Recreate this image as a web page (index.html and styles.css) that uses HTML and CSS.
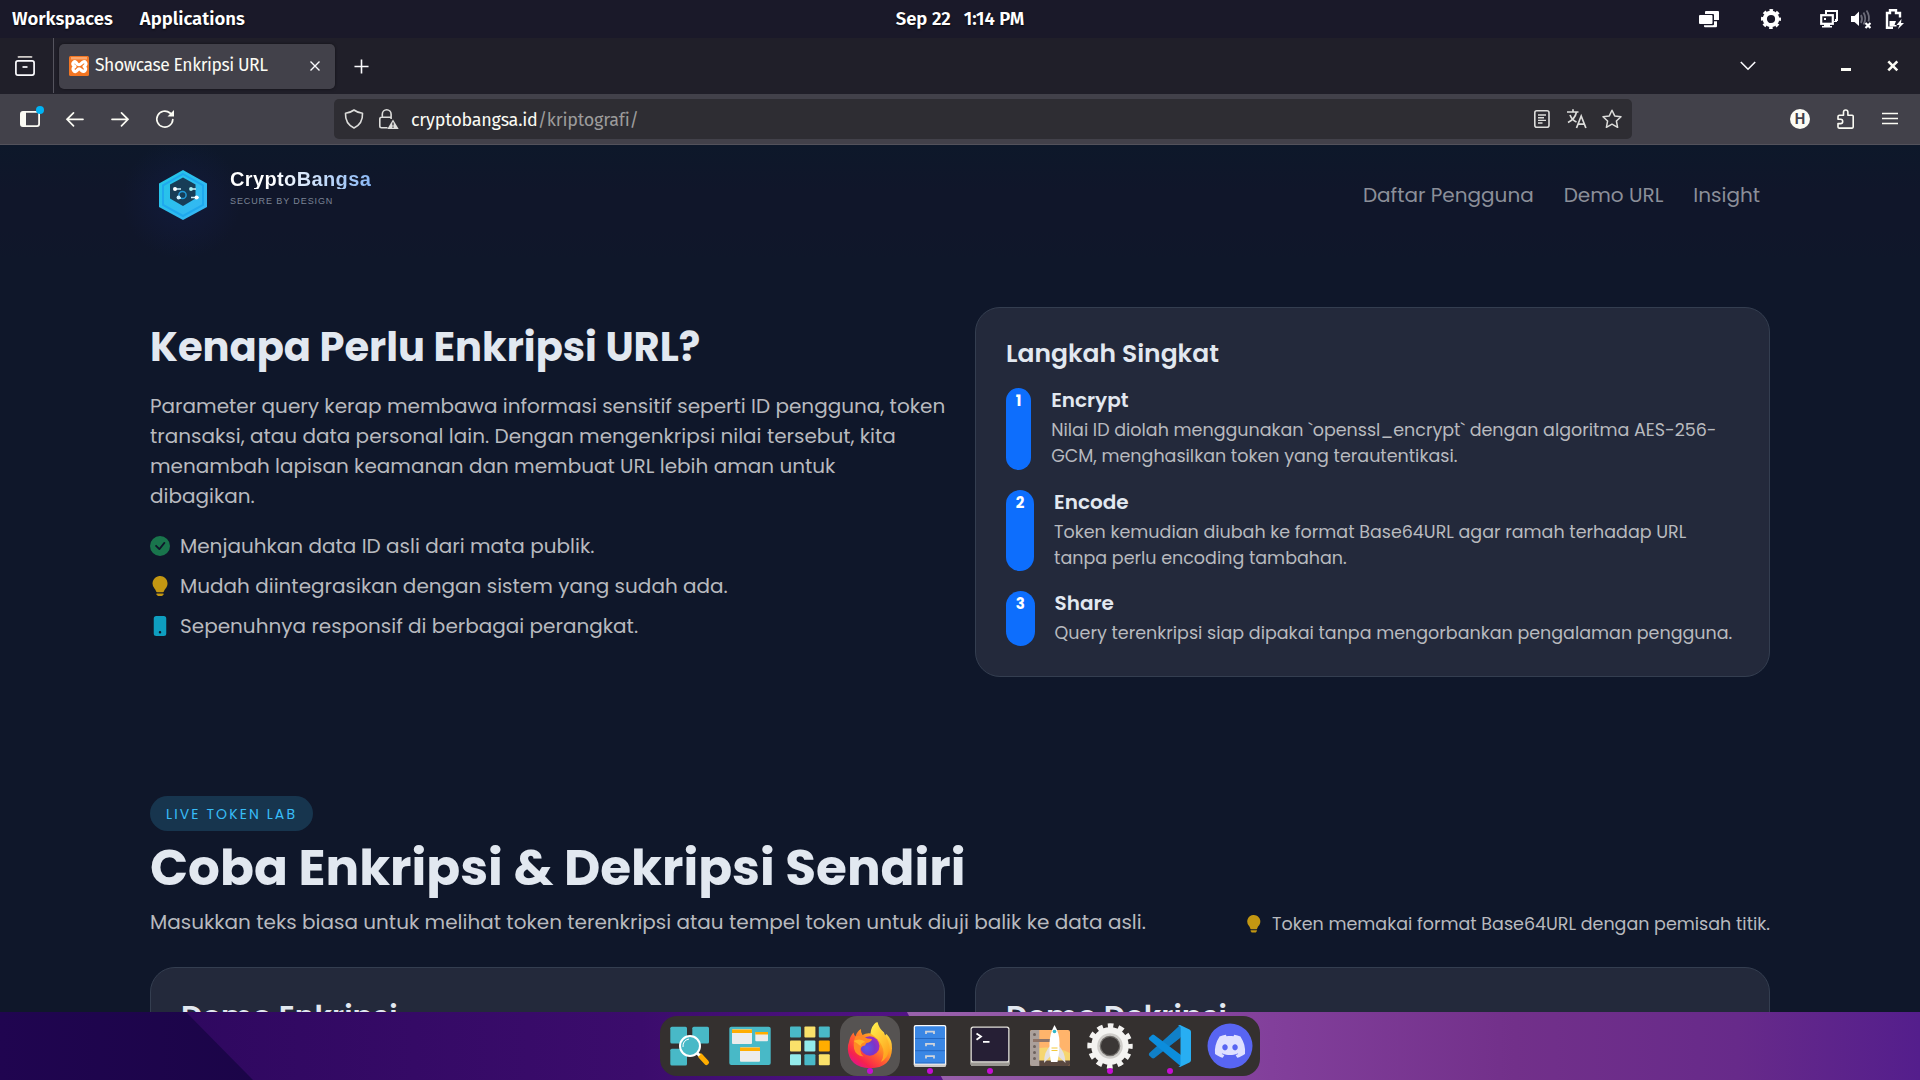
FILE: index.html
```html
<!DOCTYPE html>
<html lang="id">
<head>
<meta charset="utf-8">
<title>Showcase Enkripsi URL</title>
<link rel="stylesheet" href="styles.css">
</head>
<body>
<header class="panel">
  <nav class="panel-left"><span>Workspaces</span><span>Applications</span></nav>
  <div class="clock"><span>Sep 22</span><span>1:14 PM</span></div>
  <div class="tray">
    <svg class="ic tray-windows" viewBox="0 0 20 20"><path fill="#fff" d="M7 2h12q1 0 1 1v8h-5V6q0-1-1-1H6V3q0-1 1-1zM1 6h11.500q1 0 1 1v7q0 1-1 1H1q-1 0-1-1V7q0-1 1-1zM5 16.300h9q1 0 1-1v-3h3V17q0 1.300-1 1.300H6q-1 0-1-1z"/></svg>
    <svg class="ic tray-gear" viewBox="0 0 20 20"><circle cx="10" cy="10" r="6.200" fill="none" stroke="#fff" stroke-width="4.200"/><circle cx="10" cy="10" r="8.800" fill="none" stroke="#fff" stroke-width="2.400" stroke-dasharray="3.600 3.312" stroke-dashoffset="1.800"/></svg>
    <svg class="ic tray-screens" viewBox="0 0 20 20"><path fill="none" stroke="#fff" stroke-width="2" d="M6 5V2h11v9h-2"/><rect x="1.200" y="6.200" width="11.600" height="8.600" fill="none" stroke="#fff" stroke-width="2.200"/><path fill="#fff" d="M4 9h2v2H4zM4 15h6v2h2v1.500H2V17h2zM14 12h3v1h-3z"/></svg>
    <svg class="ic tray-sound" viewBox="0 0 20 20"><path fill="#fff" d="M0 7h3.500L8 2.500v14.500L3.500 13H0z"/><path fill="none" stroke="#6c6b78" stroke-width="1.800" d="M10 6q2 4 0 8M12.500 3.500q3.500 6 0 12M15.500 1.500q3.500 5 2 11"/><path stroke="#fff" stroke-width="2.200" d="M14.500 14l5 5m0-5l-5 5"/></svg>
    <svg class="ic tray-battery" viewBox="0 0 20 20"><path fill="none" stroke="#fff" stroke-width="2.400" d="M8 18.800H2V4h3V1.200h6V4h4v4.500"/><path fill="#fff" d="M4.500 12h6.500l-1.500 4h2v1.500H4.500zM16.500 10l-5 6h3l-1.500 4 6-6h-3z"/></svg>
  </div>
</header>

<div class="tabbar">
  <svg class="ic" viewBox="0 0 20 20" fill="none" stroke="#fbfbfe" stroke-width="1.700"><path stroke="#cfcbc8" d="M3 1.500Q3.500.800 4.500.800h11q1 0 1.500.700"/><rect x=".9" y="4.900" width="18.200" height="14.200" rx="2"/><path d="M7.500 11h5"/></svg>
  <div class="tab-divider"></div>
  <div class="tab">
    <svg class="ic" viewBox="0 0 20 20"><rect width="20" height="20" rx="1.500" fill="#f37623"/><path fill="#f9a76e" d="M2 1h16v2.500H2z"/><path fill="none" stroke="#fff" stroke-width="3.200" stroke-linecap="round" stroke-linejoin="round" d="M7.800 7.500Q6.500 4.500 4.500 6.500t1.500 4q-3 1.500-1.500 4t4-.500q1.500-2.500 3.500 0 2.500 2.500 4 .500t-1-4q3-2 1.500-4t-4.300 1q-2.200 2.500-4.400 0z"/></svg>
    <span class="tab-title">Showcase Enkripsi URL</span>
    <svg class="tab-close" viewBox="0 0 10 10" stroke="#fbfbfe" stroke-width="1.400"><path d="M.5.5l9 9m0-9l-9 9"/></svg>
  </div>
  <svg class="newtab" viewBox="0 0 16 16" stroke="#fbfbfe" stroke-width="1.700"><path d="M8 .5v15M.5 8h15"/></svg>
  <svg class="tab-list" viewBox="0 0 16 10" fill="none" stroke="#fbfbfe" stroke-width="1.600"><path d="M.8 1L8 8.200 15.200 1"/></svg>
  <svg class="win-min" viewBox="0 0 12 12"><path fill="#fbfbf4" d="M1 8h10v3H1z"/></svg>
  <svg class="win-close" viewBox="0 0 12 12" stroke="#fbfbf4" stroke-width="2.600"><path d="M1.300 1.300l9 9m0-9l-9 9"/></svg>
</div>

<div class="toolbar">
  <div class="sidebar-btn">
    <svg class="ic" viewBox="0 0 20 20"><rect x=".9" y="2.900" width="18.200" height="14.200" rx="2" fill="none" stroke="#fbfbf4" stroke-width="1.800"/><path fill="#fbfbf4" d="M1 3h5v14H1z"/></svg>
    <i class="notice"></i>
  </div>
  <svg class="ic" viewBox="0 0 20 20" fill="none" stroke="#fbfbf4" stroke-width="1.700" stroke-linecap="round"><path d="M18 10.300H2.200M8.500 3.800L2 10.300l6.500 6.500"/></svg>
  <svg class="ic" viewBox="0 0 20 20" fill="none" stroke="#fbfbf4" stroke-width="1.700" stroke-linecap="round"><path d="M2 10.300h15.800M11.500 3.800l6.500 6.500-6.500 6.500"/></svg>
  <svg class="ic" viewBox="0 0 20 20" fill="none" stroke="#fbfbf4" stroke-width="1.700" stroke-linecap="round"><path d="M17.800 10.500A8 8 0 1 1 15 4l2.200 2"/><path fill="#fbfbf4" stroke="none" d="M19 1v6.500h-6.500z"/></svg>
  <div class="urlbar">
    <svg class="ic" viewBox="0 0 20 20" fill="none" stroke="#dddddb" stroke-width="1.600" stroke-linejoin="round"><path d="M10 1q4 3 8.500 3.200Q19 14.500 10 19 1 14.500 1.500 4.200 6 4 10 1z"/></svg>
    <svg class="ic lock" viewBox="0 0 20 20" fill="none" stroke="#dddddb" stroke-width="1.600"><path d="M8.500 18.800H2.500q-1.700 0-1.700-1.700V10q0-1.700 1.700-1.700h8.800M3.300 8V5.200a4.400 4.400 0 0 1 8.800 0V10"/><path fill="#dddddb" stroke="none" d="M14 10.500L20 20.500H8z"/><path stroke="#2e2d33" stroke-width="1.300" d="M14 13.500v3M14 17.500v1.300"/></svg>
    <span class="url">cryptobangsa.id<span class="url-path">/kriptografi/</span></span>
    <svg class="ic" viewBox="0 0 20 20" fill="none" stroke="#dddddb" stroke-width="1.600"><rect x="2.800" y="1.800" width="14.200" height="16.400" rx="2"/><path stroke-width="1.400" d="M6 6h8M6 8.700h6M6 11.400h8M6 14h4.500"/></svg>
    <svg class="ic" viewBox="0 0 20 20" fill="none" stroke="#dddddb" stroke-width="1.700"><path d="M0 3h11.500M6 .2V3M9.500 3Q8 10 1 13.500M3 6q2 5 6.500 7M9.500 19l4.700-12 4.700 12M11.300 15.200h6"/></svg>
    <svg class="ic" viewBox="0 0 20 20" fill="none" stroke="#dddddb" stroke-width="1.500" stroke-linejoin="round"><path d="M10 1.200l2.700 5.700 6.300.800-4.600 4.300 1.200 6.300L10 15.200l-5.600 3.100L5.600 12 1 7.700l6.300-.800z"/></svg>
  </div>
  <div class="account">H</div>
  <svg class="ic" viewBox="0 0 20 20" fill="none" stroke="#fbfbf4" stroke-width="1.600" stroke-linejoin="round"><path d="M4.500 6.300h4V3.200a2.200 2.200 0 0 1 4.400 0v3.100h4.300q1 0 1 1v10.800q0 1-1 1H4q-1 0-1-1v-3.500h2.500a2.200 2.200 0 0 0 0-4.400H3V7.500q0-1.200 1.500-1.200z"/></svg>
  <svg class="ic" viewBox="0 0 20 20" stroke="#fbfbf4" stroke-width="1.300"><path d="M2 4.500h16M2 9.500h16M2 14.500h16"/></svg>
</div>

<main class="viewport">
  <header class="site-header">
    <div class="brand">
      <svg class="logo" viewBox="0 0 50 52">
        <defs><linearGradient id="hex" x1="0" y1="0" x2="1" y2="1"><stop offset="0" stop-color="#22c8e6"/><stop offset="1" stop-color="#38b4f6"/></linearGradient></defs>
        <path fill="url(#hex)" d="M25 1l24 13.500v23.500L25 51 1 38V14.500z"/>
        <path fill="none" stroke="#1fa9ee" stroke-width="2" d="M25 5l20 11.300v19.700L25 47 5 36V16.300z"/>
        <path fill="#173d57" d="M25 8.500l12.500 7v14L25 37l-13-7.500v-14z"/>
        <circle cx="24.500" cy="26" r="3.600" fill="none" stroke="#2299d8" stroke-width="1.500"/>
        <path stroke="#c9eefa" stroke-width="1.300" d="M17 20h6M33 20h5M19 29h4M33 28.500h8"/>
        <g fill="#fff"><circle cx="17" cy="20" r="2"/><circle cx="33" cy="20" r="1.900" fill="#a8f0f2"/><circle cx="20.500" cy="28.500" r="1.900" fill="#cdefff"/><circle cx="38.500" cy="28.500" r="2"/></g>
      </svg>
      <div class="brand-text"><strong>CryptoBangsa</strong><small>SECURE BY DESIGN</small></div>
    </div>
    <nav class="site-nav"><a>Daftar Pengguna</a><a>Demo URL</a><a>Insight</a></nav>
  </header>

  <section class="why">
    <div class="why-text">
      <h2>Kenapa Perlu Enkripsi URL?</h2>
      <p>Parameter query kerap membawa informasi sensitif seperti ID pengguna, token<br>transaksi, atau data personal lain. Dengan mengenkripsi nilai tersebut, kita<br>menambah lapisan keamanan dan membuat URL lebih aman untuk<br>dibagikan.</p>
      <ul>
        <li><svg viewBox="0 0 16 16" fill="#19754c"><path d="M16 8A8 8 0 1 1 0 8a8 8 0 0 1 16 0m-3.970-3.030a.75.75 0 0 0-1.080.022L7.477 9.417 5.384 7.323a.75.75 0 0 0-1.060 1.060L6.970 11.030a.75.75 0 0 0 1.079-.020l3.992-4.990a.75.75 0 0 0-.010-1.050z"/></svg>Menjauhkan data ID asli dari mata publik.</li>
        <li><svg viewBox="0 0 16 16" fill="#c39712"><path d="M2 6a6 6 0 1 1 10.174 4.310c-.203.196-.359.400-.453.619l-.762 1.769A.5.5 0 0 1 10.500 13h-5a.5.5 0 0 1-.460-.302l-.761-1.770a2 2 0 0 0-.453-.618A5.980 5.980 0 0 1 2 6m3 8.500a.5.5 0 0 1 .500-.500h5a.5.5 0 0 1 0 1l-.224.447a1 1 0 0 1-.894.553H6.618a1 1 0 0 1-.894-.553L5.500 15a.5.5 0 0 1-.500-.500"/></svg>Mudah diintegrasikan dengan sistem yang sudah ada.</li>
        <li><svg viewBox="0 0 16 16" fill="#0e9ec0"><path d="M3 2a2 2 0 0 1 2-2h6a2 2 0 0 1 2 2v12a2 2 0 0 1-2 2H5a2 2 0 0 1-2-2zm6 11a1 1 0 1 0-2 0 1 1 0 0 0 2 0"/></svg>Sepenuhnya responsif di berbagai perangkat.</li>
      </ul>
    </div>
    <article class="card steps">
      <h3>Langkah Singkat</h3>
      <div class="step"><b>1</b><div><h4>Encrypt</h4><p>Nilai ID diolah menggunakan `openssl_encrypt` dengan algoritma AES-256-<br>GCM, menghasilkan token yang terautentikasi.</p></div></div>
      <div class="step"><b>2</b><div><h4>Encode</h4><p>Token kemudian diubah ke format Base64URL agar ramah terhadap URL<br>tanpa perlu encoding tambahan.</p></div></div>
      <div class="step"><b>3</b><div><h4>Share</h4><p>Query terenkripsi siap dipakai tanpa mengorbankan pengalaman pengguna.</p></div></div>
    </article>
  </section>

  <section class="lab">
    <div class="lab-head">
      <div>
        <span class="pill">LIVE TOKEN LAB</span>
        <h1>Coba Enkripsi &amp; Dekripsi Sendiri</h1>
        <p>Masukkan teks biasa untuk melihat token terenkripsi atau tempel token untuk diuji balik ke data asli.</p>
      </div>
      <div class="hint"><svg viewBox="0 0 16 16" fill="#c39712"><path d="M2 6a6 6 0 1 1 10.174 4.310c-.203.196-.359.400-.453.619l-.762 1.769A.5.5 0 0 1 10.500 13h-5a.5.5 0 0 1-.460-.302l-.761-1.770a2 2 0 0 0-.453-.618A5.980 5.980 0 0 1 2 6m3 8.500a.5.5 0 0 1 .500-.500h5a.5.5 0 0 1 0 1l-.224.447a1 1 0 0 1-.894.553H6.618a1 1 0 0 1-.894-.553L5.500 15a.5.5 0 0 1-.500-.500"/></svg>Token memakai format Base64URL dengan pemisah titik.</div>
    </div>
    <div class="demos">
      <article class="card demo"><h3>Demo Enkripsi</h3></article>
      <article class="card demo"><h3>Demo Dekripsi</h3></article>
    </div>
  </section>
</main>

<footer class="desktop">
  <svg class="wallpaper" viewBox="0 0 1920 68" preserveAspectRatio="none">
    <defs>
      <linearGradient id="w0"><stop offset="0" stop-color="#200550"/><stop offset="1" stop-color="#1b0548"/></linearGradient>
      <linearGradient id="w1"><stop offset="0" stop-color="#2f0860"/><stop offset=".6" stop-color="#3b0c6c"/><stop offset="1" stop-color="#561489"/></linearGradient>
      <linearGradient id="w2"><stop offset="0" stop-color="#9a62ac"/><stop offset=".36" stop-color="#823f9b"/><stop offset=".6" stop-color="#72308a"/><stop offset=".82" stop-color="#672a8a"/><stop offset="1" stop-color="#541e8c"/></linearGradient>
    </defs>
    <path fill="url(#w0)" d="M0 0h190l68 68H0z"/>
    <path fill="url(#w1)" d="M186 0h722l36 68H253z"/>
    <path fill="url(#w2)" d="M907 0h1013v68H943z"/>
  </svg>
  <div class="dock">
    <div class="app"><svg viewBox="0 0 60 60"><g fill="#48b9c7"><rect x="10.300" y="10.700" width="16.700" height="16.700" rx="1.500"/><rect x="32.300" y="10.700" width="16.700" height="16.700" rx="1.500"/><rect x="10.300" y="32.700" width="16.700" height="16.700" rx="1.500"/></g><path stroke="#ffad00" stroke-width="5" stroke-linecap="round" d="M40.500 40l6 6.500"/><path stroke="#fff" stroke-width="3" d="M36.500 36.500l3 3"/><circle cx="30" cy="30" r="10" fill="#48b9c7" stroke="#fff" stroke-width="2"/><path fill="none" stroke="#fff" stroke-width="1" d="M23 31q-.5-6.500 6-8"/></svg></div>
    <div class="app"><svg viewBox="0 0 60 60"><rect x="9.300" y="10.700" width="41.400" height="38.300" rx="2" fill="#48b9c7"/><g fill="#ececec"><rect x="12" y="13.300" width="20" height="14.700" rx="1"/><rect x="35.300" y="16" width="12.700" height="9.300" rx="1"/><rect x="20" y="31.300" width="20" height="14.500" rx="1"/></g><path fill="#ffad00" d="M12 13.500h20V17H12zM35.300 16H48v2.500H35.300zM20 31.500h20V35H20z"/></svg></div>
    <div class="app"><svg viewBox="0 0 60 60"><g fill="#49b9c7"><rect x="10" y="10.500" width="11" height="11" rx="1"/><rect x="38.800" y="10.500" width="11" height="11" rx="1"/><rect x="24.400" y="38.300" width="11" height="11" rx="1"/></g><g fill="#fae16a"><rect x="24.400" y="10.500" width="11" height="11" rx="1"/><rect x="10" y="24.400" width="11" height="11" rx="1"/><rect x="38.800" y="38.300" width="11" height="11" rx="1"/></g><g fill="#94ebeb"><rect x="24.400" y="24.400" width="11" height="11" rx="1"/><rect x="10" y="38.300" width="11" height="11" rx="1"/></g><rect x="38.800" y="24.400" width="11" height="11" rx="1" fill="#ffad00"/></svg></div>
    <div class="app active"><svg viewBox="0 0 60 60">
      <defs>
        <linearGradient id="fa" x1=".85" y1=".1" x2=".2" y2=".95"><stop offset="0" stop-color="#fff44f"/><stop offset=".35" stop-color="#ffa021"/><stop offset=".6" stop-color="#ff5a33"/><stop offset=".85" stop-color="#f6234d"/><stop offset="1" stop-color="#e31587"/></linearGradient>
        <radialGradient id="fb" cx=".35" cy=".6" r=".7"><stop offset="0" stop-color="#5858e8"/><stop offset=".6" stop-color="#7a35c8"/><stop offset="1" stop-color="#a82bbd"/></radialGradient>
        <linearGradient id="fc" x1="0" y1="0" x2=".6" y2="1"><stop offset="0" stop-color="#fff44f"/><stop offset="1" stop-color="#ffa51f"/></linearGradient>
      </defs>
      <path fill="url(#fa)" d="M9 26q1-6 4.500-9.500Q14 19 15.500 20.500 17 15 21 13q-.5 3.500 1.500 6 4-2.500 9-1.500 0-7 6-11.500 1.500 6.500 6.500 10.500l1 3 1.500-1.500q6 6 5.500 14.500Q51.500 52 30 52.200 9 51.500 7.800 33q-.2-4 1.200-7z"/>
      <path fill="url(#fc)" d="M30.500 17.500Q31 10 36.500 6q1 6 6 10.500 8 8 6.500 18-1.500 8-8 11.500 5-9 .500-17-3-6.500-11-11.500z"/>
      <circle cx="29.800" cy="30" r="9.700" fill="url(#fb)"/>
      <path fill="#ff8a24" d="M15.500 20.500q4-2 8.500.500 3 2 8 2-.5 3-5.500 4-1 1-1.500 2.500-5 .500-4.500 5.500 0 3 3 5.500-8-1-9.500-8-1-7 1.500-12z"/>
      <path fill="#ffb52a" d="M13.500 25q7-3.500 12 1-4 .5-5 4-4-3.500-7-5z"/>
    </svg><i></i></div>
    <div class="app"><svg viewBox="0 0 60 60"><rect x="13.700" y="9" width="32.600" height="41.700" rx="2" fill="#fafafa"/><path fill="#cfcbc9" d="M14 48.500h32v.7q0 1.500-1.500 1.500h-29q-1.500 0-1.500-1.500z"/><rect x="15" y="10.300" width="30" height="37" rx="1" fill="#3a87e5"/><path stroke="#2468c2" d="M15 22.500h30M15 34.700h30M15 47h30"/><path fill="none" stroke="#cfd3da" stroke-width="1.800" d="M26 18v-2.300h8V18M26 30.200v-2.300h8v2.300M26 42.400v-2.300h8v2.300"/></svg><i></i></div>
    <div class="app"><svg viewBox="0 0 60 60"><rect x="10.500" y="10.500" width="39" height="39.500" rx="2.500" fill="#e2e0da"/><path fill="#9b9893" d="M10.500 46.500h39v1q0 2.500-2.500 2.500H13q-2.500 0-2.500-2.500z"/><rect x="11.800" y="11.800" width="36.400" height="33.400" rx="1.500" fill="#261f35"/><path fill="none" stroke="#fff" stroke-width="1.800" d="M16.500 17.500l4.500 3-4.500 3.200M23 25.800h6.500"/></svg><i></i></div>
    <div class="app"><svg viewBox="0 0 60 60"><rect x="10" y="14" width="40" height="36" rx="2" fill="#ffb46b"/><path fill="#f6d66f" d="M19 32q16-2 31 5v9H19z"/><path fill="#5a4840" d="M10 44.500h40V48q0 2-2 2H12q-2 0-2-2z"/><path fill="#aba09b" d="M12 14h7.300v36H12q-2 0-2-2V16q0-2 2-2z"/><g fill="#6d625e"><circle cx="14.500" cy="18.500" r="1.500"/><circle cx="14.500" cy="24.500" r="1.500"/><circle cx="14.500" cy="30.500" r="1.500"/><circle cx="14.500" cy="36.500" r="1.500"/><circle cx="14.500" cy="42.500" r="1.500"/><path d="M13 23h18v3H13z" fill="#8e7468"/></g><path fill="#e4e0de" d="M31 29q-7 6-7 18l7.500-8zM38 29q7 6 7.500 18L37 39z"/><path fill="#fff" d="M34.500 9q5 8 5 18t-2 19h-6.500Q29 37 29.500 27t5-18z"/><path stroke="#f3c93c" d="M31.500 32h6M31.500 34.500h6"/><circle cx="34.500" cy="15.500" r="1.800" fill="#2fb6c8"/></svg></div>
    <div class="app"><svg viewBox="0 0 60 60"><circle cx="30" cy="30" r="20" fill="none" stroke="#f4f3f1" stroke-width="5.400" stroke-dasharray="5.600 4.872" stroke-dashoffset="2.800"/><circle cx="30" cy="30" r="14" fill="none" stroke="#f4f3f1" stroke-width="9.500"/><circle cx="30" cy="30" r="11.300" fill="none" stroke="#cfcdca" stroke-width="3"/><circle cx="30" cy="30" r="9.700" fill="#3b3736" stroke="#716e6b" stroke-width="1.200"/></svg><i></i></div>
    <div class="app"><svg viewBox="0 0 60 60"><path fill="#0b6fb4" d="M9.500 39.500l3 2.500q1 .7 2 0L41 21V9.500l-2 .5z"/><path fill="#1080c8" d="M9.300 37L40 9.500V22L14 42q-1 .7-2 0l-2.700-2.500q-1-1.300 0-2.500z"/><path fill="#0c8ddc" d="M9.300 21.500L12 19q1-.8 2.300 0L41 39v11.500L9.300 23.800q-1-1.200 0-2.300z"/><path fill="#28aef2" d="M40 9l9.500 4.500q1.500.7 1.500 2.300v28.400q0 1.600-1.500 2.300L40 51q-1 0-1.800-1 2.300.7 2.300-1.500V11.500Q40.500 9.500 38 10q1-1 2-1z"/></svg><i></i></div>
    <div class="app"><svg viewBox="0 0 60 60"><circle cx="30" cy="30" r="22.500" fill="#5865f2"/><path transform="translate(14.900 15.100) scale(1.260)" fill="#dfe1ff" d="M20.317 4.370a19.791 19.791 0 0 0-4.885-1.515.074.074 0 0 0-.079.037c-.211.375-.445.865-.608 1.250-1.845-.276-3.680-.276-5.487 0-.164-.393-.406-.874-.618-1.250a.077.077 0 0 0-.079-.037 19.736 19.736 0 0 0-4.885 1.515.070.070 0 0 0-.032.028C.533 9.046-.319 13.580.099 18.058a.082.082 0 0 0 .031.056c2.053 1.508 4.041 2.423 5.993 3.029a.078.078 0 0 0 .084-.028c.462-.630.873-1.295 1.226-1.994a.076.076 0 0 0-.042-.106c-.653-.248-1.274-.550-1.872-.892a.077.077 0 0 1-.008-.128c.126-.094.252-.192.372-.291a.074.074 0 0 1 .078-.011c3.928 1.793 8.180 1.793 12.061 0a.074.074 0 0 1 .079.010c.120.099.246.198.373.292a.077.077 0 0 1-.007.128 12.299 12.299 0 0 1-1.873.891.077.077 0 0 0-.041.107c.360.698.772 1.363 1.225 1.993a.076.076 0 0 0 .084.029c1.961-.607 3.950-1.522 6.002-3.029a.077.077 0 0 0 .031-.055c.500-5.177-.838-9.674-3.549-13.660a.061.061 0 0 0-.031-.029zM8.020 15.331c-1.183 0-2.157-1.086-2.157-2.419s.956-2.419 2.157-2.419c1.211 0 2.176 1.095 2.157 2.419 0 1.333-.956 2.419-2.157 2.419zm7.975 0c-1.183 0-2.157-1.086-2.157-2.419s.955-2.419 2.157-2.419c1.211 0 2.176 1.095 2.157 2.419 0 1.333-.946 2.419-2.157 2.419z"/></svg></div>
  </div>
</footer>
</body>
</html>
```
FILE: styles.css
```css
* { box-sizing: border-box; margin: 0; }

body {
  width: 1920px;
  height: 1080px;
  display: flex;
  flex-direction: column;
  overflow: hidden;
  background: #0f172a;
  font-family: "Poppins", "Inter", sans-serif;
  font-size: 20px;
  line-height: 1.5;
}

svg { display: block; flex: none; }
.ic { width: 20px; height: 20px; }

/* Desktop panel */
.panel {
  height: 38px;
  display: grid;
  grid-template-columns: 1fr auto 1fr;
  align-items: center;
  background: #1a1929;
  color: #fff;
  font: 600 18.500px/38px "Fira Sans", "Open Sans", sans-serif;
  text-shadow: 0 1px 2px rgba(0, 0, 0, .8);
}
.panel-left { display: flex; gap: 27px; padding-left: 12px; }
.clock { display: flex; gap: 13px; white-space: pre; }
.tray { display: flex; justify-content: flex-end; padding-right: 15px; }
.tray-gear { margin-left: 42px; }
.tray-screens { margin-left: 39px; }
.tray-sound { margin-left: 11px; }
.tray-battery { margin-left: 14px; }

/* Browser tabs */
.tabbar {
  height: 56px;
  display: flex;
  align-items: center;
  padding: 0 21px 0 15px;
  background: #201f29;
  font: 17.500px/1 "Fira Sans", "Open Sans", sans-serif;
  color: #fbfbf4;
}
.tab-divider { width: 1px; height: 55px; margin: 0 5px 1px 18px; background: #55545e; }
.tab {
  width: 276px;
  height: 45px;
  display: flex;
  align-items: center;
  padding: 0 15px 0 10px;
  background: #42414a;
  border-radius: 5px;
  box-shadow: 0 0 3px rgba(0, 0, 0, .5);
}
.tab-title { flex: 1; padding-left: 6px; white-space: nowrap; letter-spacing: -.430px; }
.tab-close { width: 10px; height: 10px; }
.newtab { width: 15px; height: 15px; margin-left: 19px; }
.tab-list { width: 16px; height: 10px; margin-left: auto; }
.win-min { width: 12px; height: 12px; margin-left: 84px; }
.win-close { width: 12px; height: 12px; margin-left: 35px; }

/* Browser toolbar */
.toolbar {
  height: 51px;
  display: flex;
  align-items: center;
  gap: 25px;
  padding: 0 20px;
  background: #42414a;
  border-bottom: 1px solid #53525b;
}
.sidebar-btn { position: relative; }
.notice {
  position: absolute;
  top: -3px;
  right: -4px;
  width: 8px;
  height: 8px;
  border-radius: 50%;
  background: #00b3f4;
}
.urlbar {
  width: 1298px;
  height: 40px;
  display: flex;
  align-items: center;
  gap: 15px;
  margin: 0 133px 0 134px;
  padding: 0 10px;
  background: #2e2d33;
  border-radius: 5px;
}
.url {
  flex: 1;
  margin-left: -3px;
  padding-top: 2px;
  font: 18px/1 "Fira Sans", "Open Sans", sans-serif;
  letter-spacing: -.230px;
  color: #fbfbf4;
}
.url-path { color: #9c9b9b; }
.account {
  width: 20px;
  height: 20px;
  border-radius: 50%;
  background: #fbfbf4;
  color: #42414a;
  text-align: center;
  font: 700 14px/20px "Inter", sans-serif;
}

/* Web page */
.viewport {
  height: 867px;
  overflow: hidden;
  padding: 0 150px;
  background: #0f172a;
  color: #e2e8f0;
}
.site-header {
  height: 114px;
  display: flex;
  justify-content: space-between;
  margin: 0 -150px;
  padding: 24px 160px 0 157px;
  background:
    radial-gradient(circle 60px at 182px 54px, rgba(20, 35, 90, .35), rgba(20, 35, 90, .2) 45%, transparent),
    linear-gradient(#0d182a, #10162a 40%, #10162a 75%, #0f172a);
}
.brand { display: flex; gap: 22px; padding-left: 1px; }
.logo { width: 50px; height: 52px; }
.brand-text { display: flex; flex-direction: column; }
.brand-text strong {
  font: 700 20px/20px "Liberation Sans", Arial, sans-serif;
  letter-spacing: .370px;
  background: linear-gradient(90deg, #fff 30%, #8ab8f5);
  -webkit-background-clip: text;
  background-clip: text;
  color: transparent;
}
.brand-text small {
  margin-top: 7px;
  font: 9px/10px "Liberation Sans", Arial, sans-serif;
  letter-spacing: .900px;
  color: #7b8495;
}
.site-nav { display: flex; gap: 30px; padding-top: 11px; color: #8b8f99; }

.why {
  display: grid;
  grid-template-columns: 795px 795px;
  gap: 30px;
  margin-top: 48px;
}
.why-text { padding-top: 16px; }
h2 { font-size: 40px; font-weight: 700; line-height: 48px; }
p, li, .hint { color: #b8babf; white-space: nowrap; }
.why-text p { margin: 20px 0; }
ul { list-style: none; padding: 0; display: flex; flex-direction: column; gap: 10px; }
li { display: flex; align-items: center; gap: 10px; }
li svg { width: 20px; height: 20px; }

.card {
  background: #23293b;
  border: 1px solid #343e50;
  border-radius: 25px;
  padding: 30px;
}
.steps { display: flex; flex-direction: column; gap: 20px; height: 370px; }
.steps h3 { font-size: 25px; font-weight: 600; line-height: 32px; margin-bottom: -2px; }
.step { display: flex; gap: 20px; }
.step b {
  padding: 5.250px 9.750px;
  border-radius: 20px;
  background: #0d6efd;
  color: #fff;
  font-size: 15px;
  line-height: 15px;
}
.step h4 { font-size: 20px; font-weight: 600; line-height: 24px; margin-bottom: 5px; }
.step p { font-size: 17.500px; line-height: 26.250px; }

.lab { margin-top: 119px; }
.lab-head { display: flex; justify-content: space-between; align-items: flex-end; }
.pill {
  display: block;
  width: max-content;
  margin-bottom: 6px;
  padding: 8px 16px 6px;
  border-radius: 18px;
  background: #17354e;
  color: #38bdf8;
  font-size: 14px;
  line-height: 21px;
  letter-spacing: 2.100px;
}
h1 { font-size: 50px; font-weight: 700; line-height: 62px; margin-bottom: 8px; }
.hint { display: flex; align-items: center; gap: 10px; font-size: 17.500px; line-height: 26.250px; }
.hint svg { width: 17.500px; height: 17.500px; }
.demos { display: grid; grid-template-columns: 795px 795px; gap: 30px; margin-top: 30px; }
.demo { height: 300px; }
.demo h3 { font-size: 30px; font-weight: 600; line-height: 38px; }

/* Desktop strip with the dock */
.desktop {
  position: relative;
  height: 68px;
  display: flex;
  justify-content: center;
  align-items: flex-start;
  padding-top: 4px;
}
.wallpaper { position: absolute; inset: 0; width: 1920px; height: 68px; }
.dock {
  position: relative;
  display: flex;
  height: 60px;
  border-radius: 17px;
  background: #34302f;
}
.app { position: relative; width: 60px; height: 60px; border-radius: 17px; }
.app svg { width: 60px; height: 60px; }
.active { background: #565352; }
.app i {
  position: absolute;
  left: 27px;
  top: 51.500px;
  width: 6px;
  height: 6px;
  border-radius: 50%;
  background: #c40fd2;
}
```
